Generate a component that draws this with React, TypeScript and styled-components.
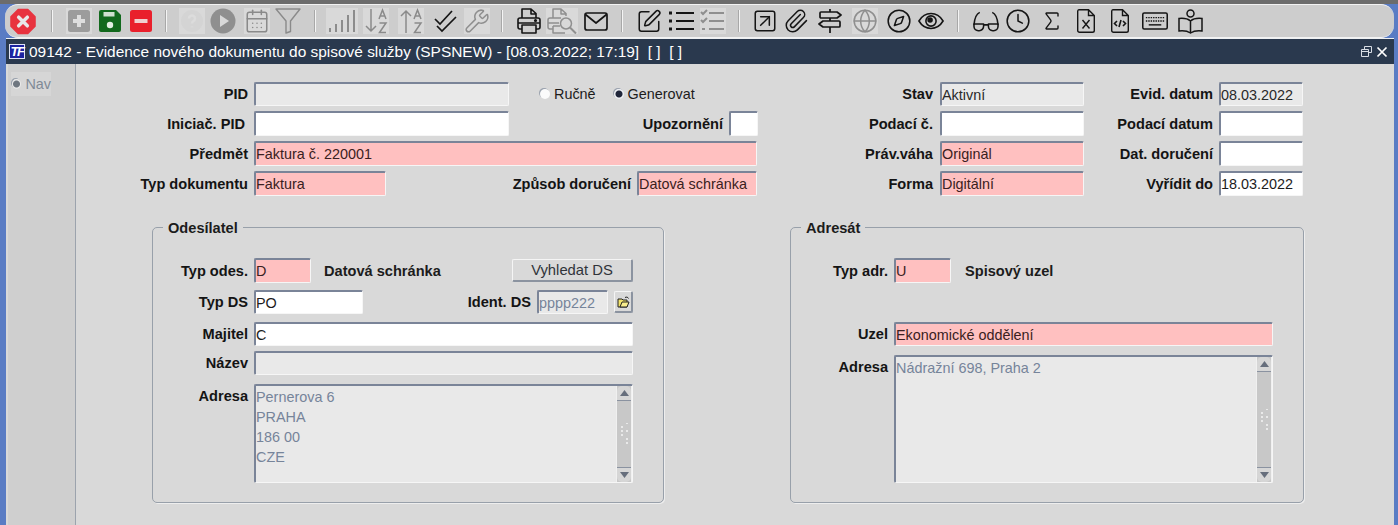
import React from "react";
import styled, { createGlobalStyle } from "styled-components";
import { CalendarDays, Wrench, SquarePen, SquareArrowUpRight, Paperclip, Globe, Compass, Clock, Sigma } from "lucide-react";

const Global = createGlobalStyle`
  html, body { margin: 0; padding: 0; height: 525px; overflow: hidden; background: #5a7cc4; }
  body { font-family: "Liberation Sans", Arial, sans-serif; }
  * { box-sizing: border-box; }
`;

const Screen = styled.div`
  width: 1398px; height: 525px; display: flex; flex-direction: column;
  background: #5a7cc4; overflow: hidden;
`;
const TopStrip = styled.div`height: 4px; background: #6c6c6c; flex: none;`;
const Toolbar = styled.div`
  height: 34px; flex: none; margin: 0 4px 0 5px; display: flex; align-items: center;
  background: #cdcdcd; border-top: 1px solid #f2f2f2; border-bottom: 1px solid #f2f2f2;
  border-radius: 13px;
`;
const ToolCell = styled.div<{ $w: number }>`
  width: ${(p) => p.$w}px; flex: none; height: 32px; display: flex; align-items: center; justify-content: center;
`;
const Shade = styled.div<{ $on?: boolean; $w?: number }>`
  height: 26px; width: ${(p) => p.$w ?? 26}px; flex: none; display: flex; align-items: center; justify-content: center;
  background: ${(p) => (p.$on ? "#d9d9d9" : "transparent")};
  color: ${(p) => (p.$on ? "#8f8f8f" : "#1c1c1c")};
`;
const Separator = styled.div`width: 2px; height: 22px; background: #f4f4f4; border-left: 1px solid #a8a8a8;`;

const Window = styled.div`flex: 1; margin: 0 4px 0 6px; display: flex; flex-direction: column; min-height: 0;`;
const TitleBar = styled.div`
  height: 26px; flex: none; background: #2a394e; border-top: 1px solid #eef0f2;
  display: flex; align-items: center; padding: 0 6px 0 3px; color: #fff; font-size: 15.45px;
`;
const Logo = styled.div`
  width: 16px; height: 15px; background: #1c22a0; border: 1px solid #dfe3f5; color: #fff; margin-right: 4px;
  font: italic bold 13px/13px "Liberation Sans", sans-serif; text-align: center; letter-spacing: -1.5px;
`;
const TitleText = styled.div`flex: 1; white-space: pre;`;
const WinBtn = styled.div`margin-left: 4px; display: flex; align-items: center;`;

const Content = styled.div`flex: 1; display: flex; background: #d9d9d9; min-height: 0;`;
const NavRail = styled.div`
  width: 68px; flex: none; margin-left: 2px; background: #cfcfcf; border-right: 1px solid #9ca3ad; padding: 8px 0 0 3px;
`;
const NavTab = styled.div`
  width: 40px; height: 24px; padding-left: 1px; background: #d6d6d6; display: flex; align-items: center; gap: 4px;
  color: #7f8a96; font-size: 14.4px;
`;
const Main = styled.div`flex: 1; padding-top: 18px; min-width: 0;`;
const TopForm = styled.div`display: flex;`;
const Block = styled.div<{ $w: number; $ml?: number }>`
  width: ${(p) => p.$w}px; margin-left: ${(p) => p.$ml ?? 0}px; display: flex; flex-direction: column;
`;
const Row = styled.div<{ $mt?: number; $top?: boolean }>`
  display: flex; align-items: ${(p) => (p.$top ? "flex-start" : "center")}; margin-top: ${(p) => p.$mt ?? 0}px;
`;
const Label = styled.div<{ $w: number; $gap?: number; $down?: number }>`
  width: ${(p) => p.$w}px; margin-right: ${(p) => p.$gap ?? 6}px; margin-top: ${(p) => p.$down ?? 0}px;
  flex: none; text-align: right; font-size: 14.6px; font-weight: bold; color: #141414; white-space: nowrap;
`;
const Static = styled.div<{ $ml: number }>`
  margin-left: ${(p) => p.$ml}px; width: 118px; flex: none;
  font-size: 14.6px; font-weight: bold; color: #1c1c1c; white-space: nowrap;
`;
const kinds = {
  white: { bg: "#ffffff", fg: "#1c1c1c" },
  pink: { bg: "#ffc0c0", fg: "#3a2020" },
  grey: { bg: "#e9e9e9", fg: "#2a2a2a" },
  muted: { bg: "#e9e9e9", fg: "#76849a" },
};
type Kind = keyof typeof kinds;
const Field = styled.input<{ $w: number; $h?: number; $kind: Kind }>`
  width: ${(p) => p.$w}px; height: ${(p) => p.$h ?? 25}px; flex: none; padding: 0; outline: none;
  border-style: solid; border-width: 2px 1px 1px 2px;
  border-color: #7a8498 #f6f6f6 #f6f6f6 #7a8498; border-radius: 2px;
  background: ${(p) => kinds[p.$kind].bg}; color: ${(p) => kinds[p.$kind].fg};
  font: 14.4px "Liberation Sans", Arial, sans-serif;
`;
const RadioGroup = styled.div<{ $ml: number }>`
  margin-left: ${(p) => p.$ml}px; display: flex; align-items: center; gap: 4px; font-size: 14.4px; color: #1c1c1c;
`;
const RadioDot = styled.span<{ $on?: boolean }>`
  width: 10px; height: 10px; border-radius: 50%; display: inline-block;
  background: ${(p) => (p.$on ? "radial-gradient(circle, #20263a 0 3px, #eef0f4 4px)" : "#fbfbfb")};
  box-shadow: -1px -1px 0 #9aa2ae;
`;
const NavDot = styled(RadioDot)`
  background: radial-gradient(circle, #6f7780 0 3px, #e8e8e8 4px);
`;
const Groups = styled.div`display: flex; margin: 31px 0 0 76px; gap: 126px;`;
const Group = styled.div<{ $w: number }>`
  position: relative; width: ${(p) => p.$w}px; height: 276px; padding-top: 30px;
  border: 1px solid #98a0aa; border-radius: 5px; box-shadow: 1px 1px 0 #eeeeee;
`;
const Legend = styled.div`
  position: absolute; left: 10px; top: -8px; padding: 0 5px; background: #d9d9d9;
  font-size: 14.6px; font-weight: bold; color: #1c1c1c; line-height: 16px;
`;
const PushButton = styled.div<{ $w: number; $h: number; $ml: number }>`
  width: ${(p) => p.$w}px; height: ${(p) => p.$h}px; margin-left: ${(p) => p.$ml}px; flex: none;
  display: flex; align-items: center; justify-content: center; font-size: 14.8px; color: #30343a;
  background: #d9d9d9; border-style: solid; border-width: 1px 2px 2px 1px;
  border-color: #f5f5f5 #8b93a0 #8b93a0 #f5f5f5; border-radius: 2px;
`;
const Memo = styled.div<{ $w: number; $h: number }>`
  width: ${(p) => p.$w}px; height: ${(p) => p.$h}px; flex: none; display: flex;
  border-style: solid; border-width: 2px 1px 1px 2px; border-color: #7a8498 #f6f6f6 #f6f6f6 #7a8498;
  background: #e9e9e9; border-radius: 2px;
`;
const MemoText = styled.div`
  flex: 1; padding: 1px 0 0 0; font-size: 14.4px; line-height: 20px; color: #76849a; white-space: pre-line;
`;
const Scroll = styled.div`
  width: 16px; flex: none; display: flex; flex-direction: column; background: #c8c8c8;
  border-left: 1px solid #f0f0f0; border-right: 1px solid #f0f0f0;
`;
const ScrollEnd = styled.div`
  height: 15px; flex: none; background: #d6d6d6; display: flex; align-items: center; justify-content: center;
  border-bottom: 1px solid #8a92a0; border-radius: 5px 5px 0 0;
`;
const ScrollEndBottom = styled(ScrollEnd)`
  border-bottom: 0; border-top: 1px solid #8a92a0; border-radius: 0 0 5px 5px;
`;
const ScrollTrack = styled.div`flex: 1; display: flex; align-items: center; justify-content: center;`;

const Up = () => (
  <svg width="9" height="6" viewBox="0 0 9 6"><path d="M4.500 0 9 6H0z" fill="#666e7c" /></svg>
);
const Down = () => (
  <svg width="9" height="6" viewBox="0 0 9 6"><path d="M0 0h9L4.500 6z" fill="#666e7c" /></svg>
);
const Grip = () => (
  <svg width="9" height="22" viewBox="0 0 9 22" fill="#f4f4f4">
    {[[7, 1], [2, 5], [7, 9], [2, 13], [7, 17], [2, 9], [7, 21]].map(([x, y], i) => (
      <circle key={i} cx={x} cy={y - 1} r="1" />
    ))}
  </svg>
);

const ScrollBar = () => (
  <Scroll>
    <ScrollEnd><Up /></ScrollEnd>
    <ScrollTrack><Grip /></ScrollTrack>
    <ScrollEndBottom><Down /></ScrollEndBottom>
  </Scroll>
);

const INK = "#151515";
const GREY = "#8f8f8f";

const Stop = () => (
  <svg width="27" height="27" viewBox="0 0 27 27">
    <path d="M8.500 1h10L26 8.500v10L18.500 26h-10L1 18.500v-10z" fill="#e8333f" stroke="#e8333f" strokeLinejoin="round" strokeWidth="1.500" />
    <path d="M9 9l9 9M18 9l-9 9" stroke="#e8e8e8" strokeWidth="3.600" strokeLinecap="round" />
  </svg>
);
const PlusBox = () => (
  <svg width="22" height="22" viewBox="0 0 22 22">
    <rect width="22" height="22" rx="2.500" fill="#9c9c9c" />
    <path d="M11 5v12M5 11h12" stroke="#dedede" strokeWidth="4" />
  </svg>
);
const SaveBox = () => (
  <svg width="22" height="22" viewBox="0 0 22 22">
    <path d="M2 0h15l5 5v15a2 2 0 0 1-2 2H2a2 2 0 0 1-2-2V2a2 2 0 0 1 2-2z" fill="#12691d" />
    <rect x="4.500" y="2" width="11" height="4.500" fill="#cfe0cf" />
    <circle cx="11" cy="15" r="3.200" fill="#e3efe3" />
  </svg>
);
const MinusBox = () => (
  <svg width="22" height="22" viewBox="0 0 22 22">
    <rect width="22" height="22" rx="2.500" fill="#e9202c" />
    <rect x="4.500" y="9" width="13" height="4" fill="#efd0d0" />
  </svg>
);
const Help = () => (
  <svg width="24" height="24" viewBox="0 0 24 24">
    <circle cx="12" cy="12" r="11" fill="#d4d4d4" />
    <path d="M9 9.500a3 3 0 1 1 4.500 2.600c-1 .6-1.500 1.200-1.500 2.400M12 17.500v.8" stroke="#dcdcdc" strokeWidth="2.400" fill="none" />
  </svg>
);
const Play = () => (
  <svg width="26" height="26" viewBox="0 0 26 26">
    <circle cx="13" cy="13" r="12.500" fill="#8f8f8f" />
    <path d="M10 7l9 6-9 6z" fill="#d8d8d8" />
  </svg>
);
const FunnelIcon = () => (
  <svg width="26" height="26" viewBox="0 0 26 26" fill="none" stroke="#8a8a8a" strokeWidth="1.400" strokeLinejoin="round">
    <path d="M1 1h24L15.500 13v10.500L11 25V13z" />
  </svg>
);
const Bars = () => (
  <svg width="28" height="26" viewBox="0 0 28 26" stroke="#8c8c8c" strokeWidth="2">
    <path d="M2 24v-4M8 24v-8M14 24v-12M20 24V7M26 24V2" />
  </svg>
);
const SortIcon = ({ up }: { up?: boolean }) => (
  <svg width="24" height="26" viewBox="0 0 24 26" fill="none" stroke="#8a8a8a" strokeWidth="1.500">
    {up ? <path d="M7 25V3M2 8l5-5 5 5" /> : <path d="M7 1v22M2 18l5 5 5-5" />}
    <path d="M15 11l3.500-9L22 11M16 8h5M15.500 15H22l-6.500 9.500H22" />
  </svg>
);
const DoubleCheck = () => (
  <svg width="23" height="23" viewBox="0 0 23 23" fill="none" stroke={INK} strokeWidth="1.700">
    <path d="M1 9l5 5L18 1M3 16l5 5L22 7" />
  </svg>
);
const PrinterIcon = () => (
  <svg width="24" height="26" viewBox="0 0 24 26" fill="none" stroke={INK} strokeWidth="1.600" strokeLinejoin="round">
    <path d="M5 10V1h9l5 4.500V10M14 1v5h5" />
    <path d="M5 21H3a2 2 0 0 1-2-2v-7a2 2 0 0 1 2-2h18a2 2 0 0 1 2 2v7a2 2 0 0 1-2 2h-2" />
    <path d="M1 15h22M5 17h14v8H5z" />
    <circle cx="18.500" cy="12.500" r=".8" fill={INK} />
  </svg>
);
const PreviewIcon = () => (
  <svg width="30" height="26" viewBox="0 0 30 26" fill="none" stroke={GREY} strokeWidth="1.500" strokeLinejoin="round">
    <path d="M6 10V1h8l5 4.500V8M14 1v5h5" />
    <path d="M6 21H3a2 2 0 0 1-2-2v-7a2 2 0 0 1 2-2h11M1 15h11M6 18h7M6 18v7h12" />
    <circle cx="19" cy="15.500" r="5.500" />
    <path d="M23 19.500l6 6" strokeWidth="2" />
  </svg>
);
const MailIcon = () => (
  <svg width="24" height="19" viewBox="0 0 24 19" fill="none" stroke={INK} strokeWidth="1.700" strokeLinejoin="round">
    <rect x="1" y="1" width="22" height="17" rx="2" />
    <path d="M1.500 2.500L12 11l10.500-8.500" />
  </svg>
);
const Bullets = ({ c }: { c: string }) => (
  <svg width="25" height="22" viewBox="0 0 25 22" fill="none" stroke={c} strokeWidth="2.200">
    <path d="M7 3h18M7 11h18M7 19h18" />
    <path d="M0 3h3M0 11h3M0 19h3" strokeWidth="3" />
  </svg>
);
const Checks = () => (
  <svg width="25" height="24" viewBox="0 0 25 24" fill="none" stroke="#8f8f8f" strokeWidth="2">
    <path d="M1 3l2 2 4-4M1 11l2 2 4-4M2 20h3M9 4h15M9 12h15M9 20h15" />
  </svg>
);
const SignIcon = () => (
  <svg width="24" height="26" viewBox="0 0 24 26" fill="none" stroke={INK} strokeWidth="1.700" strokeLinejoin="round">
    <path d="M12 1v3M12 10v3M12 19v6" />
    <path d="M3 4h16l4 3-4 3H3a1 1 0 0 1-1-1V5a1 1 0 0 1 1-1z" />
    <path d="M21 13H5l-4 3 4 3h16a1 1 0 0 0 1-1v-4a1 1 0 0 0-1-1z" />
  </svg>
);
const EyeIcon = () => (
  <svg width="28" height="20" viewBox="0 0 28 20" fill="none" stroke={INK} strokeWidth="1.700">
    <path d="M1 10c3-5 8-8 13-8s10 3 13 8c-3 5-8 8-13 8S4 15 1 10z" />
    <circle cx="14" cy="10" r="5.500" />
    <circle cx="13" cy="9" r="3" fill={INK} stroke="none" />
  </svg>
);
const GlassesIcon = () => (
  <svg width="27" height="21" viewBox="0 0 27 21" fill="none" stroke={INK} strokeWidth="1.600" strokeLinejoin="round">
    <path d="M1 14c.5-6 1.500-11 6-13M26 14c-.5-6-1.500-11-6-13" />
    <path d="M1 13h10v2.500A4.500 4.500 0 0 1 6.500 20h-1A4.500 4.500 0 0 1 1 15.500zM16 13h10v2.500a4.500 4.500 0 0 1-4.500 4.500h-1a4.500 4.500 0 0 1-4.500-4.500zM11 14h5" />
  </svg>
);
const ExcelFile = () => (
  <svg width="18" height="24" viewBox="0 0 18 24" fill="none" stroke={INK} strokeWidth="1.400">
    <path d="M2 .7h9.500L17.300 6.500V21.500a1.800 1.800 0 0 1-1.800 1.800H2.500a1.800 1.800 0 0 1-1.800-1.800V2.500A1.800 1.800 0 0 1 2 .7zM11.500.7v5.800h5.800" />
    <path d="M5.500 11l7 8.500M12.500 11l-7 8.500" />
  </svg>
);
const CodeFile = () => (
  <svg width="18" height="24" viewBox="0 0 18 24" fill="none" stroke={INK} strokeWidth="1.400">
    <path d="M2 .7h9.500L17.300 6.500V21.500a1.800 1.800 0 0 1-1.800 1.800H2.500a1.800 1.800 0 0 1-1.800-1.800V2.500A1.800 1.800 0 0 1 2 .7zM11.500.7v5.800h5.800" />
    <path d="M6 12l-2.500 2.500L6 17M12 12l2.500 2.500L12 17M10 11l-2 7" strokeWidth="1.600" />
  </svg>
);
const KeyboardIcon = () => (
  <svg width="27" height="18" viewBox="0 0 27 18" fill="none" stroke={INK}>
    <rect x=".8" y=".8" width="25.400" height="16.400" rx="1.500" strokeWidth="1.600" />
    <path d="M4 5.500h19M4 9h19" strokeWidth="1.500" strokeDasharray="1.500 1" />
    <path d="M7 13h13" strokeWidth="1.500" />
  </svg>
);
const Reader = () => (
  <svg width="25" height="25" viewBox="0 0 25 25" fill="none" stroke={INK} strokeWidth="1.500">
    <circle cx="12.500" cy="4.500" r="3.500" />
    <path d="M12.500 12c-3-2.500-7-3-11.500-2.500V22c4.500-.5 8.500 0 11.500 2 3-2 7-2.500 11.500-2V9.500C19.500 9 15.500 9.500 12.500 12zM12.500 12v12" />
  </svg>
);

type Item = { c: number; sep?: boolean; el?: React.ReactNode; on?: boolean; bw?: number };
const lu = { size: 26, strokeWidth: 1.4 };
const items: Item[] = [
  { c: 29, el: <Stop /> },
  { c: 52, sep: true },
  { c: 76, el: <PlusBox />, on: true },
  { c: 110, el: <SaveBox /> },
  { c: 144, el: <MinusBox /> },
  { c: 165, sep: true },
  { c: 189, el: <Help />, on: true },
  { c: 223, el: <Play /> },
  { c: 257, el: <CalendarDays {...lu} color="#8a8a8a" />, on: true },
  { c: 291, el: <FunnelIcon /> },
  { c: 314, sep: true },
  { c: 339, el: <Bars />, on: true, bw: 32 },
  { c: 377, el: <SortIcon />, on: true },
  { c: 411, el: <SortIcon up />, on: true },
  { c: 446, el: <DoubleCheck /> },
  { c: 479, el: <Wrench {...lu} color="#8f8f8f" />, on: true },
  { c: 502, sep: true },
  { c: 525, el: <PrinterIcon /> },
  { c: 562, el: <PreviewIcon />, on: true, bw: 32 },
  { c: 599, el: <MailIcon /> },
  { c: 622, sep: true },
  { c: 646, el: <SquarePen size={27} strokeWidth={1.4} color={INK} /> },
  { c: 682, el: <Bullets c={INK} /> },
  { c: 715, el: <Checks />, on: true },
  { c: 739, sep: true },
  { c: 762, el: <SquareArrowUpRight {...lu} color={INK} /> },
  { c: 796, el: <Paperclip {...lu} color={INK} /> },
  { c: 830, el: <SignIcon /> },
  { c: 865, el: <Globe {...lu} color="#8f8f8f" />, on: true },
  { c: 898, el: <Compass {...lu} color={INK} /> },
  { c: 933, el: <EyeIcon /> },
  { c: 958, sep: true },
  { c: 983, el: <GlassesIcon /> },
  { c: 1018, el: <Clock {...lu} color={INK} /> },
  { c: 1052, el: <Sigma size={24} strokeWidth={1.4} color={INK} /> },
  { c: 1086, el: <ExcelFile /> },
  { c: 1120, el: <CodeFile /> },
  { c: 1155, el: <KeyboardIcon /> },
  { c: 1191, el: <Reader /> },
];

const cellWidth = (i: number) => {
  const left = i === 0 ? 5 : (items[i - 1].c + items[i].c) / 2;
  const right = i === items.length - 1 ? items[i].c + 17 : (items[i].c + items[i + 1].c) / 2;
  return right - left;
};

const Ro = (p: { $w: number; $h?: number; $kind: Kind; value?: string }) => (
  <Field {...p} value={p.value ?? ""} readOnly />
);

const FolderIcon = () => (
  <svg width="13" height="12" viewBox="0 0 13 12">
    <path d="M1 3h4l1 1h4v7H1z" fill="#f2e36b" stroke="#222" strokeWidth="1" />
    <path d="M3 11l2-5h7l-2 5z" fill="#f7ec8c" stroke="#222" strokeWidth="1" />
    <path d="M8 1.500c1.500-.8 3-.3 3.500 1" stroke="#222" fill="none" />
  </svg>
);

export default function App() {
  return (
    <Screen>
      <Global />
      <TopStrip />
      <Toolbar>
        {items.map((it, i) => (
          <ToolCell key={i} $w={cellWidth(i)}>
            {it.sep ? <Separator /> : <Shade $on={it.on} $w={it.bw}>{it.el}</Shade>}
          </ToolCell>
        ))}
      </Toolbar>
      <Window>
        <TitleBar>
          <Logo>TF</Logo>
          <TitleText>09142 - Evidence nového dokumentu do spisové služby (SPSNEW) - [08.03.2022; 17:19]  [ ]  [ ]</TitleText>
          <WinBtn>
            <svg width="11" height="11" viewBox="0 0 11 11" fill="none" stroke="#d8dde4">
              <path d="M3.500 3V.5h7v6H8M.5 3.500h7v7h-7zM.5 5.500h7" />
            </svg>
          </WinBtn>
          <WinBtn>
            <svg width="12" height="12" viewBox="0 0 12 12" stroke="#fff" strokeWidth="1.700">
              <path d="M1.500 1.500l9 9M10.500 1.500l-9 9" />
            </svg>
          </WinBtn>
        </TitleBar>
        <Content>
          <NavRail>
            <NavTab><NavDot />Nav</NavTab>
          </NavRail>
          <Main>
            <TopForm>
              <Block $w={681}>
                <Row>
                  <Label $w={172}>PID</Label>
                  <Ro $w={255} $h={24} $kind="grey" />
                  <RadioGroup $ml={31}><RadioDot />Ručně</RadioGroup>
                  <RadioGroup $ml={18}><RadioDot $on />Generovat</RadioGroup>
                </Row>
                <Row $mt={5}>
                  <Label $w={169} $gap={9}>Iniciač. PID</Label>
                  <Ro $w={255} $kind="white" />
                  <Label $w={214}>Upozornění</Label>
                  <Ro $w={29} $kind="white" />
                </Row>
                <Row $mt={5}>
                  <Label $w={172}>Předmět</Label>
                  <Ro $w={503} $kind="pink" value="Faktura č. 220001" />
                </Row>
                <Row $mt={5}>
                  <Label $w={172}>Typ dokumentu</Label>
                  <Ro $w={132} $kind="pink" value="Faktura" />
                  <Label $w={245}>Způsob doručení</Label>
                  <Ro $w={120} $kind="pink" value="Datová schránka" />
                </Row>
              </Block>
              <Block $w={463} $ml={83}>
                <Row>
                  <Label $w={93} $gap={7}>Stav</Label>
                  <Ro $w={144} $h={24} $kind="grey" value="Aktivní" />
                  <Label $w={129}>Evid. datum</Label>
                  <Ro $w={84} $h={24} $kind="grey" value="08.03.2022" />
                </Row>
                <Row $mt={5}>
                  <Label $w={93} $gap={7}>Podací č.</Label>
                  <Ro $w={144} $kind="white" />
                  <Label $w={129}>Podací datum</Label>
                  <Ro $w={84} $kind="white" />
                </Row>
                <Row $mt={5}>
                  <Label $w={93} $gap={7}>Práv.váha</Label>
                  <Ro $w={144} $kind="pink" value="Originál" />
                  <Label $w={129}>Dat. doručení</Label>
                  <Ro $w={84} $kind="white" />
                </Row>
                <Row $mt={5}>
                  <Label $w={93} $gap={7}>Forma</Label>
                  <Ro $w={144} $kind="pink" value="Digitální" />
                  <Label $w={129}>Vyřídit do</Label>
                  <Ro $w={84} $kind="white" value="18.03.2022" />
                </Row>
              </Block>
            </TopForm>
            <Groups>
              <Group $w={512}>
                <Legend>Odesílatel</Legend>
                <Row>
                  <Label $w={95}>Typ odes.</Label>
                  <Ro $w={57} $kind="pink" value="D" />
                  <Static $ml={13}>Datová schránka</Static>
                  <PushButton $w={121} $h={23} $ml={70}>Vyhledat DS</PushButton>
                </Row>
                <Row $mt={7}>
                  <Label $w={95}>Typ DS</Label>
                  <Ro $w={109} $h={24} $kind="white" value="PO" />
                  <Label $w={168}>Ident. DS</Label>
                  <Ro $w={71} $h={24} $kind="muted" value="pppp222" />
                  <PushButton $w={19} $h={22} $ml={6}><FolderIcon /></PushButton>
                </Row>
                <Row $mt={8}>
                  <Label $w={95}>Majitel</Label>
                  <Ro $w={379} $h={24} $kind="white" value="C" />
                </Row>
                <Row $mt={5}>
                  <Label $w={95}>Název</Label>
                  <Ro $w={379} $h={24} $kind="grey" />
                </Row>
                <Row $mt={9} $top>
                  <Label $w={95} $down={4}>Adresa</Label>
                  <Memo $w={379} $h={99}>
                    <MemoText>{"Pernerova 6\nPRAHA\n186 00\nCZE"}</MemoText>
                    <ScrollBar />
                  </Memo>
                </Row>
              </Group>
              <Group $w={514}>
                <Legend>Adresát</Legend>
                <Row>
                  <Label $w={97}>Typ adr.</Label>
                  <Ro $w={57} $kind="pink" value="U" />
                  <Static $ml={14}>Spisový uzel</Static>
                </Row>
                <Row $mt={39}>
                  <Label $w={97}>Uzel</Label>
                  <Ro $w={379} $h={24} $kind="pink" value="Ekonomické oddělení" />
                </Row>
                <Row $mt={9} $top>
                  <Label $w={97} $down={4}>Adresa</Label>
                  <Memo $w={379} $h={128}>
                    <MemoText>Nádražní 698, Praha 2</MemoText>
                    <ScrollBar />
                  </Memo>
                </Row>
              </Group>
            </Groups>
          </Main>
        </Content>
      </Window>
    </Screen>
  );
}
